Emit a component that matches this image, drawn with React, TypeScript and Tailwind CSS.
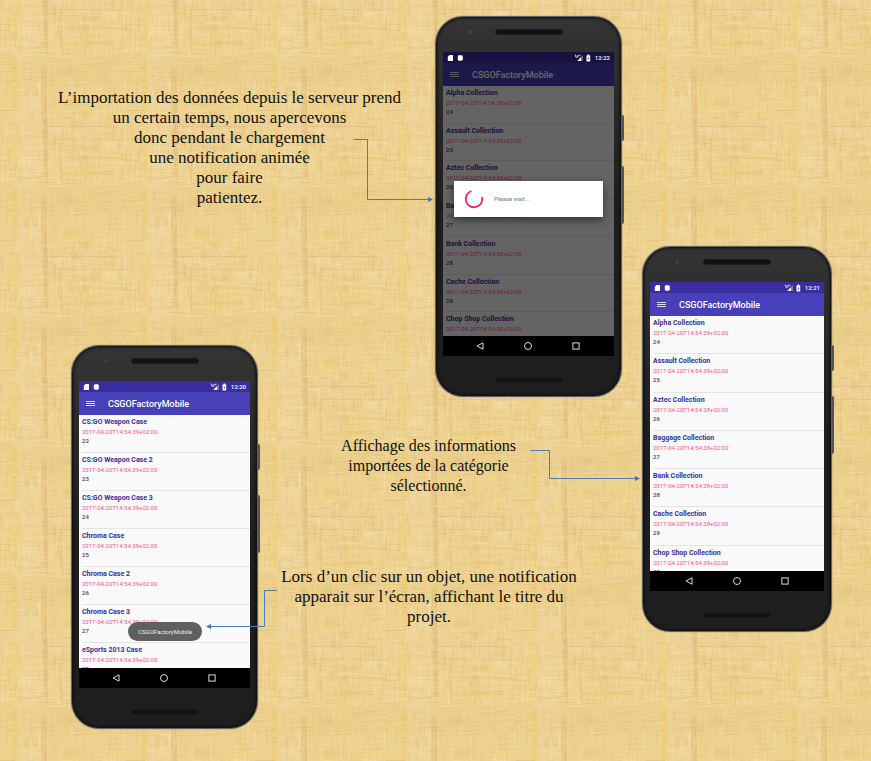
import React from "react";

type Item = { title: string; date: string; id: number };

const collectionDate = "2017-04-20T14:54:38+02:00";
const caseDate = "2017-04-20T14:54:39+02:00";

const toItems = (names: string[], date: string, first: number): Item[] =>
  names.map((title, i) => ({ title, date, id: first + i }));

const collections = toItems(
  [
    "Alpha Collection",
    "Assault Collection",
    "Aztec Collection",
    "Baggage Collection",
    "Bank Collection",
    "Cache Collection",
    "Chop Shop Collection",
  ],
  collectionDate,
  24,
);

const cases = toItems(
  [
    "CS:GO Weapon Case",
    "CS:GO Weapon Case 2",
    "CS:GO Weapon Case 3",
    "Chroma Case",
    "Chroma Case 2",
    "Chroma Case 3",
    "eSports 2013 Case",
  ],
  caseDate,
  22,
);

/* Papyrus: one 130px tile woven from seeded threads, repeated over the slide. */
const TILE = 130;

function makeThreads() {
  let seed = 7;
  const rnd = () => {
    seed = (seed * 16807) % 2147483647;
    return seed / 2147483647;
  };
  const tones = ["#dcb765", "#f9e6b8", "#eabf8c", "#efcd6c", "#d2ad64", "#fbe9c4"];
  const out: React.ReactElement[] = [];
  for (let i = 0; i < 60; i++) {
    out.push(
      <rect
        key={`p${i}`}
        x={Math.floor(rnd() * TILE)}
        y={Math.floor(rnd() * TILE)}
        width={3 + rnd() * 14}
        height={2 + rnd() * 8}
        fill={tones[Math.floor(rnd() * tones.length)]}
        opacity={0.16}
      />,
    );
  }
  for (let i = 0; i < 1300; i++) {
    const vertical = rnd() < 0.5;
    const len = 3 + rnd() * 18;
    const x = Math.floor(rnd() * TILE);
    const y = Math.floor(rnd() * TILE);
    out.push(
      <rect
        key={i}
        x={x}
        y={y}
        width={vertical ? 1 : len}
        height={vertical ? len : 1}
        fill={tones[Math.floor(rnd() * tones.length)]}
        opacity={0.08 + rnd() * 0.17}
      />,
    );
  }
  return out;
}

const threads = makeThreads();

function Papyrus() {
  return (
    <svg className="absolute inset-0 h-full w-full" aria-hidden="true">
      <defs>
        <pattern id="papyrus" x="17" y="57" width={TILE} height={TILE} patternUnits="userSpaceOnUse">
          <rect width={TILE} height={TILE} fill="#edd290" />
          <rect width="24" height={TILE} fill="#f4dcac" opacity="0.3" />
          <rect y="0" width={TILE} height="28" fill="#e6c884" opacity="0.35" />
          <rect y="62" width={TILE} height="20" fill="#f2cf9c" opacity="0.3" />
          <rect x="125" width="5" height="54" fill="#efca64" opacity="0.3" />
          <rect x="122" y="62" width="8" height="60" fill="#efca64" opacity="0.3" />
          <rect x="24" y="10" width="6" height="56" fill="#d9a870" opacity="0.22" />
          <rect x="26" y="60" width="5" height="60" fill="#d9a870" opacity="0.25" />
          <rect x="28" y="20" width="1" height="90" fill="#c99055" opacity="0.2" />
          <rect x="43" y="80" width="2" height="45" fill="#e0b550" opacity="0.25" />
          <rect x="20" y="69" width="80" height="1" fill="#c98e58" opacity="0.25" />
          <rect x="30" y="82" width="80" height="1" fill="#c98e58" opacity="0.2" />
          <rect x="46" y="114" width="50" height="4" fill="#e3b049" opacity="0.2" />
          <rect x="50" y="100" width="60" height="2" fill="#e3b049" opacity="0.2" />
          {threads}
        </pattern>
      </defs>
      <rect width="100%" height="100%" fill="url(#papyrus)" />
    </svg>
  );
}

function Connector({ className, points, head }: { className: string; points: string; head: string }) {
  return (
    <svg className={`absolute z-20 overflow-visible ${className}`} aria-hidden="true">
      <polyline points={points} fill="none" stroke="#4a7ebb" strokeWidth="1" />
      <polygon points={head} fill="#3a76c0" />
    </svg>
  );
}

function StatusBar({ time }: { time: string }) {
  return (
    <div className="relative z-20 -mb-[11px] flex h-[11px] items-center justify-between px-1 text-white">
      <svg className="h-2 w-5" viewBox="0 0 20 8" aria-hidden="true">
        <path d="M2.400 1h3.600v6H.8V2.800z" fill="#fff" />
        <rect x="10.800" y="1.300" width="5" height="5.400" rx="1.400" fill="#fff" />
      </svg>
      <div className="flex items-center gap-[3px]">
        <svg className="h-2 w-[18px]" viewBox="0 0 18 8" aria-hidden="true">
          <path d="M9 1v6H3z" fill="#fff" opacity="0.35" />
          <path d="M7 3.300V7H3.300z" fill="#fff" />
          <path d="M.8 1h1v2.200h2M4 1v2.200M6.500 1.300H4.500" fill="none" stroke="#fff" strokeWidth="0.8" />
          <path d="M12.500 1.500h1v-.9h1.700v.9h1V7.400h-3.700z" fill="#fff" />
          <path d="M14.600 2.600l-1 2h.8v1.600l1-2h-.8z" fill="#3a2ea0" />
        </svg>
        <span className="text-[6px] leading-[10px] font-medium">{time}</span>
      </div>
    </div>
  );
}

function AppBar() {
  return (
    <header>
      <div className="h-[11px] bg-[#3a2d9f]" />
      <div className="flex h-[23px] items-center bg-[#4740b8]">
        <button type="button" aria-label="Menu" className="ml-[7px] flex w-[9px] flex-col gap-px">
          <span className="h-px w-full bg-white/80" />
          <span className="h-px w-full bg-white/80" />
          <span className="h-px w-full bg-white/80" />
        </button>
        <h2 className="ml-[13px] text-[9px] leading-3 font-medium text-white">CSGOFactoryMobile</h2>
      </div>
    </header>
  );
}

function NavBar() {
  return (
    <nav className="relative z-20 flex h-5 items-center justify-center gap-[38px] bg-black pr-px">
      <button type="button" aria-label="Back">
        <svg className="h-[10px] w-[10px]" viewBox="0 0 10 10" fill="none" stroke="#ddd">
          <path d="M8 1.800v6.400L2 5z" />
        </svg>
      </button>
      <button type="button" aria-label="Home">
        <svg className="h-[10px] w-[10px]" viewBox="0 0 10 10" fill="none" stroke="#ddd">
          <circle cx="5" cy="5" r="3.500" />
        </svg>
      </button>
      <button type="button" aria-label="Recents">
        <svg className="h-[10px] w-[10px]" viewBox="0 0 10 10" fill="none" stroke="#ddd">
          <rect x="1.900" y="1.900" width="6.200" height="6.200" />
        </svg>
      </button>
    </nav>
  );
}

function Speaker() {
  return <div className="mx-auto h-[6px] w-[68px] rounded-full border border-[#1c1c1c] bg-[#121212]" />;
}

type PhoneProps = {
  time: string;
  items: Item[];
  viewHeight: string;
  listHeight: string;
  dimmed?: boolean;
  children?: React.ReactNode;
};

function Phone({ time, items, viewHeight, listHeight, dimmed, children }: PhoneProps) {
  return (
    <article className="relative w-full font-[Roboto,'Liberation_Sans',sans-serif]">
      <div className="absolute top-[99px] -right-[2px] h-[26px] w-1 rounded-sm bg-[#55555a]" />
      <div className="absolute top-[150px] -right-[2px] h-[58px] w-1 rounded-sm bg-[#55555a]" />
      <div className="relative rounded-[28px] border border-[#606164] bg-linear-to-b from-[#343434] via-[#1e1e1e] to-[#1e1e1e] px-[7px] shadow-[inset_0_0_3px_1px_#0c0c0c,0_0_1px_#444]">
        <div className="relative h-[35px] pt-[12px]">
          <span className="absolute top-[13px] left-[25px] size-1 rounded-full bg-[#4a3a44]" />
          <Speaker />
        </div>
        <div className="relative">
          <StatusBar time={time} />
          <AppBar />
          <div className={`overflow-hidden bg-[#fafafa] ${viewHeight}`}>
            <ul className={`flex flex-col pl-[3px] ${listHeight}`}>
              {items.map((item) => (
                <li key={item.id} className="flex-1 border-b border-[#e4e4e4] pt-[3px]">
                  <h3 className="text-[7px] leading-[9px] font-bold text-[#38309c]">{item.title}</h3>
                  <p className="text-[6px] leading-[9px] text-[#ff4f8c]">{item.date}</p>
                  <p className="text-[6px] leading-[9px] font-medium text-[#444]">{item.id}</p>
                </li>
              ))}
            </ul>
          </div>
          <NavBar />
          {dimmed && <div className="absolute inset-0 z-10 bg-black/60" />}
          {children}
        </div>
        <div className="h-[40px] pt-[21px]">
          <Speaker />
        </div>
      </div>
    </article>
  );
}

function WaitDialog() {
  return (
    <div
      role="dialog"
      aria-label="Please wait"
      className="absolute inset-x-[11px] top-[129px] z-20 flex h-[36px] items-center gap-[10px] bg-white pl-[10px] shadow-[0_3px_8px_rgba(0,0,0,0.5)]"
    >
      <svg className="size-5" viewBox="0 0 20 20" aria-hidden="true">
        <path d="M7.500 2A8.300 8.300 0 1 0 18.100 8" fill="none" stroke="#f5207c" strokeWidth="1.800" />
      </svg>
      <p className="text-[6px] leading-[8px] text-[#777]">Please wait...</p>
    </div>
  );
}

function Toast() {
  return (
    <p
      role="status"
      className="absolute bottom-[47px] left-[49px] z-20 flex h-[19px] w-[74px] items-center justify-center rounded-full bg-[#606060] text-[6px] text-[#eee]"
    >
      CSGOFactoryMobile
    </p>
  );
}

function Note({ lines, className }: { lines: string[]; className: string }) {
  return (
    <p className={`text-center leading-[20px] whitespace-nowrap text-[#111] ${className}`}>
      {lines.map((line) => (
        <span key={line} className="block">
          {line}
        </span>
      ))}
    </p>
  );
}

export default function App() {
  return (
    <main className="relative min-h-screen overflow-hidden font-['Liberation_Serif',serif]">
      <Papyrus />
      <div className="relative grid grid-cols-[187fr_177fr_187fr_20fr_190fr] grid-rows-[329px_52px_auto] pt-4 pr-[39px] pb-8 pl-[71px]">
        <section className="relative col-span-2 col-start-1 row-start-1 pt-[72px]">
          <Note
            className="-ml-4 w-[349px] text-[17px]"
            lines={[
              "L’importation des données depuis le serveur prend",
              "un certain temps, nous apercevons",
              "donc pendant le chargement",
              "une notification animée",
              "pour faire",
              "patientez.",
            ]}
          />
          <Connector
            className="top-[123px] right-[2px] h-[62px] w-[79px]"
            points="0,0.5 13.5,0.5 13.5,60.5 75,60.5"
            head="74,58 79,60.5 74,63"
          />
        </section>

        <section className="col-start-3 row-span-2 row-start-1">
          <Phone time="12:22" items={collections} viewHeight="h-[250px]" listHeight="h-[264px]" dimmed>
            <WaitDialog />
          </Phone>
        </section>

        <section className="col-start-5 row-span-3 row-start-1 pt-[230px]">
          <Phone time="12:21" items={collections} viewHeight="h-[255px]" listHeight="h-[268px]" />
        </section>

        <section className="relative col-start-1 row-span-2 row-start-2">
          <Phone time="12:20" items={cases} viewHeight="h-[253px]" listHeight="h-[266px]">
            <Toast />
          </Phone>
          <Connector
            className="top-[245px] -right-[19px] h-[39px] w-[71px]"
            points="71,0.5 58.5,0.5 58.5,36.5 4,36.5"
            head="5,34 0,36.5 5,39"
          />
        </section>

        <section className="relative col-span-2 col-start-2 row-start-3 pt-[39px] pl-[20px]">
          <Note
            className="ml-[62px] w-[177px] text-[16px]"
            lines={["Affichage des informations", "importées de la catégorie", "sélectionné."]}
          />
          <Note
            className="mt-[71px] w-[302px] text-[17px]"
            lines={[
              "Lors d’un clic sur un objet, une notification",
              "apparait sur l’écran, affichant le titre du",
              "projet.",
            ]}
          />
          <Connector
            className="top-[53px] -right-[18px] h-[30px] w-[110px]"
            points="0,0.5 19.5,0.5 19.5,28.5 106,28.5"
            head="105,26 110,28.5 105,31"
          />
        </section>
      </div>
    </main>
  );
}
